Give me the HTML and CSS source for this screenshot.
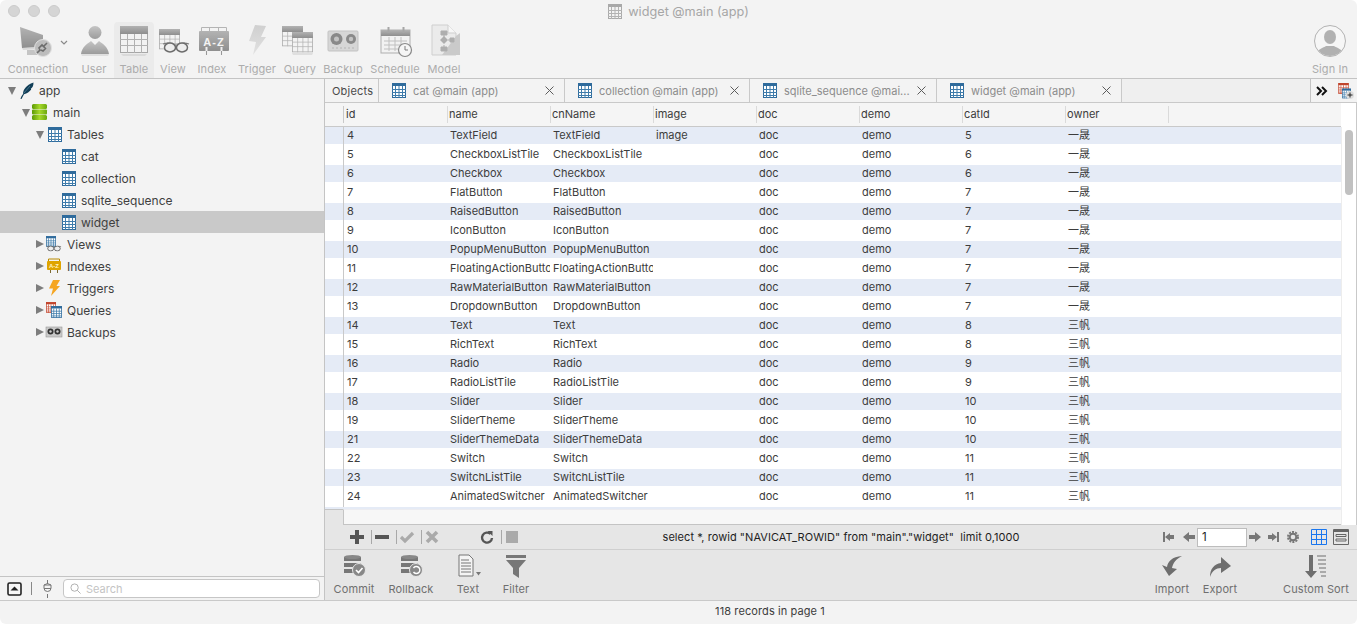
FILE: index.html
```html
<!DOCTYPE html>
<html lang="en">
<head>
<meta charset="utf-8">
<title>widget @main (app)</title>
<link rel="stylesheet" href="styles.css">
</head>
<body>
<svg class="defs" aria-hidden="true">
  <defs>
    <linearGradient id="gDark" x1="0" y1="0" x2="0" y2="1"><stop offset="0" stop-color="#a8a8a8"/><stop offset="1" stop-color="#7e7e7e"/></linearGradient>
    <linearGradient id="gLight" x1="0" y1="0" x2="0" y2="1"><stop offset="0" stop-color="#c9c9c9"/><stop offset="1" stop-color="#dedede"/></linearGradient>
    <linearGradient id="gUser" x1="0" y1="0" x2="0" y2="1"><stop offset="0" stop-color="#bdbdbd"/><stop offset="1" stop-color="#8d8d8d"/></linearGradient>
    <linearGradient id="gGreen" x1="0" y1="0" x2="1" y2="0"><stop offset="0" stop-color="#5d9a05"/><stop offset=".5" stop-color="#a6d92a"/><stop offset="1" stop-color="#6ca80d"/></linearGradient>
    <clipPath id="clipCircle"><circle cx="20" cy="17" r="15"/></clipPath>
  </defs>
  <symbol id="i-tbl" viewBox="0 0 14 15">
    <rect x=".5" y=".5" width="13" height="14" fill="#fff" stroke="#2f6b9c"/>
    <rect x="0" y="0" width="14" height="3" fill="#2f6b9c"/>
    <path d="M0 6.5h14M0 9.500h14M0 12.500h14M3.500 3v12M7 3v12M10.500 3v12" stroke="#3f7cab" fill="none"/>
  </symbol>
  <symbol id="i-tbl-red" viewBox="0 0 14 15">
    <rect x=".5" y=".5" width="13" height="14" fill="#fff" stroke="#c0442c"/>
    <rect x="0" y="0" width="14" height="3" fill="#c0442c"/>
    <path d="M0 6.500h14M0 9.500h14M0 12.500h14M3.500 3v12M7 3v12M10.500 3v12" stroke="#c9553e" fill="none"/>
  </symbol>
  <symbol id="i-tbl-gray" viewBox="0 0 14 15">
    <rect x=".5" y=".5" width="13" height="14" fill="#f3f3f3" stroke="#a9a9a9"/>
    <rect x="0" y="0" width="14" height="3" fill="#a9a9a9"/>
    <path d="M0 6.500h14M0 9.500h14M0 12.500h14M3.500 3v12M7 3v12M10.500 3v12" stroke="#b3b3b3" fill="none"/>
  </symbol>
  <symbol id="t-tbl" viewBox="0 0 28 28">
    <rect x=".5" y=".5" width="27" height="26" fill="#f4f4f4" stroke="#9c9c9c"/>
    <rect x="0" y="0" width="28" height="8" fill="url(#gDark)"/>
    <path d="M0 13.500h28M0 19.500h28M7.500 8v19M14.500 8v19M21.500 8v19" stroke="#a8a8a8" fill="none"/>
  </symbol>
  <symbol id="glasses" viewBox="0 0 28 11">
    <path d="M1 2Q7 0 12 3h4q5-3 11-1" fill="none" stroke="#666" stroke-width="1.200"/>
    <ellipse cx="8" cy="5.500" rx="5.500" ry="4.500" fill="#eee" stroke="#555" stroke-width="1.500"/>
    <ellipse cx="20" cy="5.500" rx="5.500" ry="4.500" fill="#eee" stroke="#555" stroke-width="1.500"/>
  </symbol>
  <symbol id="i-x" viewBox="0 0 9 9"><path d="M.5.500l8 8M8.500.500l-8 8" stroke="#5c5c5c" fill="none"/></symbol>
</svg>

<div class="app">
  <header class="titlebar">
    <div class="lights"><i class="light"></i><i class="light"></i><i class="light"></i></div>
    <div class="title"><svg class="title-icon"><use href="#i-tbl-gray"/></svg><span>widget @main (app)</span></div>
  </header>

  <nav class="toolbar">
    <div class="tool w60 connection">
      <svg class="tool-svg" viewBox="0 0 40 36">
        <path d="M2 3 25 11V23L4 24Z" fill="url(#gDark)"/>
        <path d="M4 24 25 23V25L5 26Z" fill="#d4d4d4"/>
        <path d="M9 26h9l2 5H9Z" fill="#bcbcbc"/>
        <circle cx="25" cy="24" r="8.500" fill="#b4b4b4" stroke="#ddd"/>
        <path d="M29 19l-4 4m3 2-4-4-3 3 1 2-3 3m4-3 2 1 3-3" stroke="#555" stroke-width="1.600" fill="none"/>
      </svg>
      <span>Connection</span>
      <svg class="chevron" viewBox="0 0 8 5"><path d="M1 1l3 3 3-3" fill="none" stroke="#8a8a8a" stroke-width="1.200"/></svg>
    </div>
    <div class="tool w40">
      <svg class="tool-svg" viewBox="0 0 40 36">
        <circle cx="21" cy="8.500" r="6.500" fill="url(#gUser)"/>
        <path d="M7 30C8 23 13 20 17 17l4 4 4-4c4 3 9 6 10 13Z" fill="url(#gUser)"/>
        <path d="M7 30h28l-1 2H8Z" fill="#dcdcdc"/>
      </svg>
      <span>User</span>
    </div>
    <div class="tool w40 active">
      <svg class="tool-svg" viewBox="0 0 40 36"><use href="#t-tbl" x="6" y="2" width="28" height="28"/><path d="M7 30h26l-2 2H9Z" fill="#d8d8d8"/></svg>
      <span>Table</span>
    </div>
    <div class="tool w38">
      <svg class="tool-svg" viewBox="0 0 40 36">
        <use href="#t-tbl" x="6" y="5" width="21" height="21"/>
        <use href="#glasses" x="9" y="18" width="28" height="11"/>
      </svg>
      <span>View</span>
    </div>
    <div class="tool w40">
      <svg class="tool-svg" viewBox="0 0 40 36">
        <path d="M9.500 7V3.500h25V7M17.500 3.500V7M26.500 3.500V7" fill="none" stroke="#aaa"/>
        <rect x="7" y="7" width="30" height="20" rx="1" fill="url(#gDark)"/>
        <text x="22" y="22" class="az">A-Z</text>
        <path d="M14.500 23v8M29.500 23v8" stroke="#eee" stroke-width="2"/>
        <path d="M14.500 27v4M29.500 27v4" stroke="#888" stroke-width="1"/>
      </svg>
      <span>Index</span>
    </div>
    <div class="tool w50">
      <svg class="tool-svg" viewBox="0 0 40 36">
        <path d="M18 1 29 2 24 13l5 0L16 31l3-13-7-1Z" fill="url(#gLight)"/>
      </svg>
      <span>Trigger</span>
    </div>
    <div class="tool w36">
      <svg class="tool-svg" viewBox="0 0 40 36">
        <use href="#t-tbl" x="2" y="2" width="21" height="21"/>
        <use href="#t-tbl" x="12" y="8" width="21" height="21"/>
        <path d="M12 29h21l-1 2H13Z" fill="#dcdcdc"/>
      </svg>
      <span>Query</span>
    </div>
    <div class="tool w50">
      <svg class="tool-svg" viewBox="0 0 40 36">
        <rect x="5" y="7" width="30" height="20" rx="1" fill="#d2d2d2" stroke="#bbb"/>
        <circle cx="13.500" cy="15" r="6" fill="#777"/><circle cx="13.500" cy="15" r="2.500" fill="#bbb"/>
        <circle cx="28" cy="15" r="5" fill="#777"/><circle cx="28" cy="15" r="2.200" fill="#bbb"/>
        <path d="M9 24h22" stroke="#aaa" stroke-dasharray="2 2"/>
      </svg>
      <span>Backup</span>
    </div>
    <div class="tool w54">
      <svg class="tool-svg" viewBox="0 0 40 36">
        <rect x="6" y="6" width="29" height="23" fill="#f2f2f2" stroke="#a5a5a5"/>
        <rect x="6" y="6" width="29" height="6" fill="url(#gDark)"/>
        <path d="M13.500 3v6M28.500 3v6" stroke="#999" stroke-width="2"/>
        <path d="M9 17h23M9 21h23M9 25h23M14 13v14M20 13v14M26 13v14" stroke="#b8b8b8" fill="none"/>
        <circle cx="30" cy="26" r="6.500" fill="#f6f6f6" stroke="#777" stroke-width="1.200"/>
        <path d="M30 22v4h3" fill="none" stroke="#666"/>
      </svg>
      <span>Schedule</span>
    </div>
    <div class="tool w44">
      <svg class="tool-svg" viewBox="0 0 40 36">
        <path d="M8 1h16l8 8v22H8Z" fill="#eaeaea" stroke="#c9c9c9"/>
        <path d="M24 1v8h8" fill="#f8f8f8" stroke="#c9c9c9"/>
        <path d="M32 12l4-3v22H18Z" fill="#c4c4c4"/>
        <path d="M17 7h6v4h-6ZM17 23h6v4h-6ZM26 14h4v4h-4ZM20 11v2M20 21v2M24 16h2" fill="#a3a3a3" stroke="#a3a3a3"/>
        <path d="M20 12l4 4-4 4-4-4Z" fill="#a3a3a3"/>
      </svg>
      <span>Model</span>
    </div>
    <div class="tool w40 signin">
      <svg class="tool-svg" viewBox="0 0 40 36">
        <circle cx="20" cy="17" r="15.500" fill="#f7f7f7" stroke="#a8a8a8"/>
        <g clip-path="url(#clipCircle)">
          <ellipse cx="20" cy="13" rx="6" ry="7" fill="#a6a6a6"/>
          <path d="M4 34c1-8 9-10 12-12h8c3 2 11 4 12 12Z" fill="#a6a6a6"/>
        </g>
      </svg>
      <span>Sign In</span>
    </div>
  </nav>

  <main class="main">
    <aside class="sidebar">
      <ul class="tree">
        <li class="node d0"><i class="tri open"></i>
          <svg class="node-icon tall" viewBox="0 0 14 17"><path d="M.5 17C1 15 1.800 13.500 3 12 3 8 6 3 13.500.500 13.500 4 12.500 5.500 10.800 6.800L11.200 7.500C9.500 9.800 7 11.500 4 12.200L1.500 17Z" fill="#123f58"/><path d="M3.500 11.500 10 4" stroke="#6c9bb0" stroke-width=".6"/></svg>
          <span>app</span></li>
        <li class="node d1"><i class="tri open"></i>
          <svg class="node-icon wide" viewBox="0 0 15 16">
            <rect x="0" y="0" width="15" height="5" rx="1.500" fill="url(#gGreen)"/>
            <rect x="0" y="5.500" width="15" height="5" rx="1" fill="url(#gGreen)"/>
            <rect x="0" y="11" width="15" height="5" rx="1.500" fill="url(#gGreen)"/>
          </svg>
          <span>main</span></li>
        <li class="node d2"><i class="tri open"></i><svg class="node-icon"><use href="#i-tbl"/></svg><span>Tables</span></li>
        <li class="node leaf"><svg class="node-icon"><use href="#i-tbl"/></svg><span>cat</span></li>
        <li class="node leaf"><svg class="node-icon"><use href="#i-tbl"/></svg><span>collection</span></li>
        <li class="node leaf"><svg class="node-icon"><use href="#i-tbl"/></svg><span>sqlite_sequence</span></li>
        <li class="node leaf selected"><svg class="node-icon"><use href="#i-tbl"/></svg><span>widget</span></li>
        <li class="node d2"><i class="tri"></i>
          <svg class="node-icon big" viewBox="0 0 16 16"><use href="#i-tbl" x="0" y="0" width="10" height="11"/><use href="#glasses" x="0" y="9.500" width="16" height="6"/></svg>
          <span>Views</span></li>
        <li class="node d2"><i class="tri"></i>
          <svg class="node-icon big" viewBox="0 0 16 16">
            <path d="M2.500 3V1h11v2" fill="none" stroke="#b98a00"/>
            <rect x="1" y="3" width="14" height="9" rx="1" fill="#dfa400"/>
            <text x="8" y="10" class="az-small">A-Z</text>
            <path d="M4.500 12v3M11.500 12v3" stroke="#7d6a30"/>
          </svg>
          <span>Indexes</span></li>
        <li class="node d2"><i class="tri"></i>
          <svg class="node-icon big" viewBox="0 0 16 16"><path d="M7 0h7L10.500 6H14L5 16l2-7.500H3Z" fill="#f5a623"/></svg>
          <span>Triggers</span></li>
        <li class="node d2"><i class="tri"></i>
          <svg class="node-icon big" viewBox="0 0 16 16"><use href="#i-tbl-red" x="0" y="0" width="10" height="11"/><use href="#i-tbl" x="5" y="4" width="11" height="12"/></svg>
          <span>Queries</span></li>
        <li class="node d2"><i class="tri"></i>
          <svg class="node-icon big" viewBox="0 0 16 16">
            <rect x="0" y="3" width="16" height="10" fill="#c9c9c9" stroke="#999" stroke-width=".6"/>
            <circle cx="4.500" cy="7.500" r="3" fill="#333"/><circle cx="4.500" cy="7.500" r="1.200" fill="#ccc"/>
            <circle cx="11.500" cy="7.500" r="3" fill="#333"/><circle cx="11.500" cy="7.500" r="1.200" fill="#ccc"/>
          </svg>
          <span>Backups</span></li>
      </ul>
      <div class="sidebar-foot">
        <svg class="foot-toggle" viewBox="0 0 15 14"><rect x="1" y="1" width="13" height="12" rx="1.500" fill="#f7f7f7" stroke="#222" stroke-width="1.600"/><path d="M7.500 4.500l4 4h-8Z" fill="#222"/></svg>
        <i class="foot-sep"></i>
        <svg class="foot-plug" viewBox="0 0 9 18"><path d="M4.500 0v4M4.500 14v4" stroke="#777"/><path d="M1 5h7v3a3.500 3.500 0 0 1-7 0ZM1 8.500h7M1 5q3.500-3 7 0" fill="none" stroke="#777"/></svg>
        <label class="search">
          <svg class="search-icon" viewBox="0 0 12 12"><circle cx="5" cy="5" r="4" fill="none" stroke="#aaa"/><path d="M8 8l3.500 3.500" stroke="#aaa"/></svg>
          <span>Search</span>
        </label>
      </div>
    </aside>

    <section class="content">
      <div class="tabs">
        <div class="tab-objects">Objects</div>
        <div class="tab t186"><svg class="tab-icon"><use href="#i-tbl"/></svg><span class="tab-label">cat @main (app)</span><span class="tab-x"><svg class="x-icon"><use href="#i-x"/></svg></span></div>
        <div class="tab t185"><svg class="tab-icon"><use href="#i-tbl"/></svg><span class="tab-label">collection @main (app)</span><span class="tab-x"><svg class="x-icon"><use href="#i-x"/></svg></span></div>
        <div class="tab t187"><svg class="tab-icon"><use href="#i-tbl"/></svg><span class="tab-label">sqlite_sequence @mai...</span><span class="tab-x"><svg class="x-icon"><use href="#i-x"/></svg></span></div>
        <div class="tab t185"><svg class="tab-icon"><use href="#i-tbl"/></svg><span class="tab-label">widget @main (app)</span><span class="tab-x"><svg class="x-icon"><use href="#i-x"/></svg></span></div>
        <div class="tab-fill"></div>
        <div class="tab-tools">
          <svg class="more" viewBox="0 0 12 10"><path d="M1 1l4 4-4 4M6 1l4 4-4 4" fill="none" stroke="#111" stroke-width="2"/></svg>
          <svg class="newtab" viewBox="0 0 16 16"><use href="#i-tbl-red" x="0" y="0" width="11" height="11"/><use href="#i-tbl" x="4" y="5" width="9" height="11"/><circle cx="12" cy="12" r="4" fill="#ddd"/><path d="M12 9.500v5M9.500 12h5" stroke="#222"/></svg>
        </div>
      </div>

      <div class="grid">
        <div class="pane">
          <table class="data">
            <colgroup><col class="c-gutter"><col class="c"><col class="c"><col class="c"><col class="c"><col class="c"><col class="c"><col class="c"><col class="c"><col></colgroup>
            <thead>
              <tr><th class="gutter"><span></span></th><th class="first"><span>id</span></th><th><span>name</span></th><th><span>cnName</span></th><th><span>image</span></th><th><span>doc</span></th><th><span>demo</span></th><th><span>catId</span></th><th><span>owner</span></th><th><span></span></th></tr>
            </thead>
            <tbody>
              <tr><td class="gutter"></td><td>4</td><td>TextField</td><td>TextField</td><td>image</td><td>doc</td><td>demo</td><td>5</td><td>一晟</td><td></td></tr>
              <tr><td class="gutter"></td><td>5</td><td>CheckboxListTile</td><td>CheckboxListTile</td><td></td><td>doc</td><td>demo</td><td>6</td><td>一晟</td><td></td></tr>
              <tr><td class="gutter"></td><td>6</td><td>Checkbox</td><td>Checkbox</td><td></td><td>doc</td><td>demo</td><td>6</td><td>一晟</td><td></td></tr>
              <tr><td class="gutter"></td><td>7</td><td>FlatButton</td><td>FlatButton</td><td></td><td>doc</td><td>demo</td><td>7</td><td>一晟</td><td></td></tr>
              <tr><td class="gutter"></td><td>8</td><td>RaisedButton</td><td>RaisedButton</td><td></td><td>doc</td><td>demo</td><td>7</td><td>一晟</td><td></td></tr>
              <tr><td class="gutter"></td><td>9</td><td>IconButton</td><td>IconButton</td><td></td><td>doc</td><td>demo</td><td>7</td><td>一晟</td><td></td></tr>
              <tr><td class="gutter"></td><td>10</td><td>PopupMenuButton</td><td>PopupMenuButton</td><td></td><td>doc</td><td>demo</td><td>7</td><td>一晟</td><td></td></tr>
              <tr><td class="gutter"></td><td>11</td><td>FloatingActionButton</td><td>FloatingActionButton</td><td></td><td>doc</td><td>demo</td><td>7</td><td>一晟</td><td></td></tr>
              <tr><td class="gutter"></td><td>12</td><td>RawMaterialButton</td><td>RawMaterialButton</td><td></td><td>doc</td><td>demo</td><td>7</td><td>一晟</td><td></td></tr>
              <tr><td class="gutter"></td><td>13</td><td>DropdownButton</td><td>DropdownButton</td><td></td><td>doc</td><td>demo</td><td>7</td><td>一晟</td><td></td></tr>
              <tr><td class="gutter"></td><td>14</td><td>Text</td><td>Text</td><td></td><td>doc</td><td>demo</td><td>8</td><td>三帆</td><td></td></tr>
              <tr><td class="gutter"></td><td>15</td><td>RichText</td><td>RichText</td><td></td><td>doc</td><td>demo</td><td>8</td><td>三帆</td><td></td></tr>
              <tr><td class="gutter"></td><td>16</td><td>Radio</td><td>Radio</td><td></td><td>doc</td><td>demo</td><td>9</td><td>三帆</td><td></td></tr>
              <tr><td class="gutter"></td><td>17</td><td>RadioListTile</td><td>RadioListTile</td><td></td><td>doc</td><td>demo</td><td>9</td><td>三帆</td><td></td></tr>
              <tr><td class="gutter"></td><td>18</td><td>Slider</td><td>Slider</td><td></td><td>doc</td><td>demo</td><td>10</td><td>三帆</td><td></td></tr>
              <tr><td class="gutter"></td><td>19</td><td>SliderTheme</td><td>SliderTheme</td><td></td><td>doc</td><td>demo</td><td>10</td><td>三帆</td><td></td></tr>
              <tr><td class="gutter"></td><td>21</td><td>SliderThemeData</td><td>SliderThemeData</td><td></td><td>doc</td><td>demo</td><td>10</td><td>三帆</td><td></td></tr>
              <tr><td class="gutter"></td><td>22</td><td>Switch</td><td>Switch</td><td></td><td>doc</td><td>demo</td><td>11</td><td>三帆</td><td></td></tr>
              <tr><td class="gutter"></td><td>23</td><td>SwitchListTile</td><td>SwitchListTile</td><td></td><td>doc</td><td>demo</td><td>11</td><td>三帆</td><td></td></tr>
              <tr><td class="gutter"></td><td>24</td><td>AnimatedSwitcher</td><td>AnimatedSwitcher</td><td></td><td>doc</td><td>demo</td><td>11</td><td>三帆</td><td></td></tr>
            </tbody>
          </table>
          <div class="sliver"></div>
          <div class="pane-foot"><i class="foot-gutter"></i><i class="foot-rest"></i></div>
        </div>
        <div class="vscroll"><div class="vscroll-head"></div><div class="vscroll-track"><i class="thumb"></i></div></div>
      </div>

      <div class="querybar">
        <div class="edit-tools">
          <svg class="ico plus" viewBox="0 0 14 14"><path d="M7 0v14M0 7h14" stroke="#555" stroke-width="4"/></svg>
          <i class="sep"></i>
          <svg class="ico" viewBox="0 0 14 14"><path d="M0 7h14" stroke="#555" stroke-width="4"/></svg>
          <i class="sep"></i>
          <svg class="ico" viewBox="0 0 14 14"><path d="M1 7l4 4 8-8" fill="none" stroke="#aaa" stroke-width="3.200"/></svg>
          <i class="sep"></i>
          <svg class="ico" viewBox="0 0 14 14"><path d="M2 2l10 10M12 2 2 12" stroke="#aaa" stroke-width="3.600"/></svg>
          <svg class="ico refresh" viewBox="0 0 14 14"><path d="M10.500 4A5 5 0 1 0 12 8" fill="none" stroke="#555" stroke-width="2.400"/><path d="M7.500 1l5 0 0 5Z" fill="#555"/></svg>
          <i class="sep"></i>
          <svg class="ico" viewBox="0 0 14 14"><rect x="1" y="1" width="12" height="12" fill="#aaa"/></svg>
        </div>
        <div class="sql">select *, rowid "NAVICAT_ROWID" from "main"."widget"&nbsp; limit 0,1000</div>
        <div class="pager">
          <svg class="nav" viewBox="0 0 12 12"><path d="M1 1h2v10H1ZM3 6l5-4v2h4v4H8v2Z" fill="#777"/></svg>
          <svg class="nav g8" viewBox="0 0 12 12"><path d="M0 6l6-5v3h6v4H6v3Z" fill="#777"/></svg>
          <div class="page-input">1</div>
          <svg class="nav" viewBox="0 0 12 12"><path d="M12 6 6 1v3H0v4h6v3Z" fill="#777"/></svg>
          <svg class="nav g7" viewBox="0 0 12 12"><path d="M11 1H9v10h2ZM9 6 4 2v2H0v4h4v2Z" fill="#777"/></svg>
          <svg class="nav g7" viewBox="0 0 12 12"><circle cx="6" cy="6" r="5" fill="none" stroke="#777" stroke-width="2" stroke-dasharray="2 1.140"/><circle cx="6" cy="6" r="3.300" fill="none" stroke="#777" stroke-width="2"/></svg>
          <svg class="view g12" viewBox="0 0 16 16"><path d="M.5.500h15v15H.5ZM.5 5.500h15M.5 10.500h15M5.500.500v15M10.500.500v15" fill="none" stroke="#1a76ee"/></svg>
          <svg class="view g6" viewBox="0 0 16 16"><path d="M.5.500h15v15H.5Z" fill="none" stroke="#666"/><path d="M0 2h16" stroke="#666" stroke-width="2"/><path d="M3 5.500h10v2H3ZM3 10h10v2H3Z" fill="none" stroke="#666"/></svg>
        </div>
      </div>

      <div class="actions">
        <div class="action a58">
          <svg class="act-svg" viewBox="0 0 26 26"><path d="M3 3h17v4H3ZM3 9h17v4H3ZM3 15h17v4H3Z" fill="#777"/><ellipse cx="11.500" cy="3" rx="8.500" ry="2" fill="#888"/><circle cx="18" cy="16" r="6.500" fill="#888" stroke="#e6e6e6"/><path d="M15 16l2.500 2.500 4-4.500" fill="none" stroke="#fff" stroke-width="1.600"/></svg>
          <span>Commit</span>
        </div>
        <div class="action a56">
          <svg class="act-svg" viewBox="0 0 26 26"><path d="M3 3h17v4H3ZM3 9h17v4H3ZM3 15h17v4H3Z" fill="#777"/><ellipse cx="11.500" cy="3" rx="8.500" ry="2" fill="#888"/><circle cx="18" cy="16" r="6.500" fill="#888" stroke="#e6e6e6"/><path d="M15.500 14a3.500 3.500 0 1 1 0 4" fill="none" stroke="#fff" stroke-width="1.400"/></svg>
          <span>Rollback</span>
        </div>
        <div class="action a58">
          <svg class="act-svg" viewBox="0 0 26 26"><path d="M4 1h10l4 4v17H4Z" fill="#f4f4f4" stroke="#777"/><path d="M6 6h8M6 9h10M6 12h10M6 15h10M6 18h10" stroke="#777"/><path d="M21 18h5l-2.500 3.500Z" fill="#777"/></svg>
          <span>Text</span>
        </div>
        <div class="action a38">
          <svg class="act-svg" viewBox="0 0 26 26"><path d="M3 1h20v3H3ZM3 6h20l-7 8v10l-6-4v-6Z" fill="#777"/></svg>
          <span>Filter</span>
        </div>
        <div class="action a48 push">
          <svg class="act-svg" viewBox="0 0 26 26"><path d="M23 2C13 3 9 7 8 13L3 11l7 11 8-7-5-1C14 9 17 5 23 2Z" fill="#6e6e6e"/></svg>
          <span>Import</span>
        </div>
        <div class="action a48">
          <svg class="act-svg" viewBox="0 0 26 26"><path d="M3 23C3 15 7 10 14 9V3l10 9-10 7v-5C9 14 5 17 3 23Z" fill="#6e6e6e"/></svg>
          <span>Export</span>
        </div>
        <div class="action a78 sort">
          <svg class="act-svg" viewBox="0 0 26 26"><path d="M6 1h4v16h4l-6 7-6-7h4Z" fill="#6e6e6e"/><path d="M14 2h9M15 6h8M15 10h8M16 14h7M17 18h6M18 22h5" stroke="#6e6e6e"/></svg>
          <span>Custom Sort</span>
        </div>
      </div>
    </section>
  </main>

  <footer class="status">118 records in page 1</footer>
</div>
</body>
</html>
```
FILE: styles.css
```css
* { box-sizing: border-box; }
html, body { margin: 0; height: 100%; background: #fff; overflow: hidden; }
body { font-family: Inter, "Noto Sans CJK SC", sans-serif; font-size: 11px; color: #3c3c3c; }
ul { margin: 0; padding: 0; list-style: none; }
i { display: block; font-style: normal; }
svg { display: block; flex: none; overflow: visible; }
.defs { position: absolute; width: 0; height: 0; overflow: hidden; }

.app { height: 624px; display: flex; flex-direction: column; background: #f3f3f3; border-radius: 6px; overflow: hidden; }

/* title bar */
.titlebar { height: 22px; flex: none; position: relative; display: flex; align-items: center; justify-content: center; }
.lights { position: absolute; left: 8px; top: 5px; display: flex; gap: 8px; }
.light { width: 12px; height: 12px; border-radius: 50%; background: #d5d5d5; border: 1px solid #cbcbcb; }
.title { display: flex; align-items: center; gap: 6px; font-size: 12.700px; color: #a6a6a6; }
.title-icon { width: 14px; height: 15px; }

/* main toolbar */
.toolbar { height: 57px; flex: none; display: flex; padding-left: 8px; border-bottom: 1px solid #c4c4c4; }
.tool { display: flex; flex-direction: column; align-items: center; height: 56px; padding-top: 2px; position: relative; color: #acacac; font-size: 11px; letter-spacing: .1px; white-space: nowrap; }
.tool-svg { width: 40px; height: 36px; opacity: .85; }
.tool span { line-height: 14px; margin-top: 2px; }
.w36 { width: 36px; } .w38 { width: 38px; } .w40 { width: 40px; } .w44 { width: 44px; }
.w50 { width: 50px; } .w54 { width: 54px; } .w60 { width: 60px; }
.connection { margin-right: 6px; }
.active { background: #ebebeb; border-radius: 4px 4px 0 0; }
.chevron { position: absolute; left: 52px; top: 18px; width: 8px; height: 5px; }
.signin { margin-left: auto; margin-right: 7px; }
.az { font: bold 11px "Liberation Sans", sans-serif; fill: #f4f4f4; text-anchor: middle; letter-spacing: 1px; }
.az-small { font: bold 6px "Liberation Sans", sans-serif; fill: #fff3c4; text-anchor: middle; }

/* body */
.main { flex: 1; min-height: 0; display: flex; }

/* sidebar */
.sidebar { width: 325px; flex: none; display: flex; flex-direction: column; border-right: 1px solid #c4c4c4; }
.tree { flex: 1; }
.node { height: 22px; display: flex; align-items: center; font-size: 12px; color: #3f3f3f; }
.d0 { padding-left: 8px; } .d1 { padding-left: 22px; } .d2 { padding-left: 36px; } .leaf { padding-left: 62px; }
.selected { background: #c9c9c9; }
.tri { width: 12px; flex: none; height: 9px; position: relative; }
.tri::before { content: ""; position: absolute; left: 0; top: 0; border-style: solid; border-color: transparent; border-width: 4.500px 0 4.500px 8px; border-left-color: #7d7d7d; }
.tri.open::before { top: 1px; border-width: 8px 4.500px 0 4.500px; border-color: #7d7d7d transparent transparent transparent; }
.node-icon { width: 14px; height: 15px; margin-right: 5px; }
.node-icon.tall { height: 17px; }
.node-icon.wide { width: 15px; height: 16px; margin-left: -2px; margin-right: 6px; }
.node-icon.big { width: 16px; height: 16px; margin-left: -2px; margin-right: 5px; }
.sidebar-foot { height: 24px; flex: none; border-top: 1px solid #c4c4c4; display: flex; align-items: center; padding-left: 7px; }
.foot-toggle { width: 15px; height: 14px; }
.foot-sep { width: 1px; height: 13px; background: #888; margin-left: 9px; }
.foot-plug { width: 9px; height: 18px; margin-left: 11px; }
.search { margin-left: 11px; width: 257px; height: 19px; background: #fff; border: 1px solid #c6c6c6; border-radius: 4px; display: flex; align-items: center; padding-left: 6px; gap: 5px; color: #c4c4c4; }
.search-icon { width: 11px; height: 11px; }

/* content */
.content { flex: 1; min-width: 0; display: flex; flex-direction: column; }
.tabs { height: 24px; flex: none; display: flex; border-bottom: 1px solid #c9c9c9; }
.tab-objects { width: 54px; flex: none; padding-left: 7px; line-height: 24px; border-right: 1px solid #c9c9c9; color: #4a4a4a; letter-spacing: .2px; }
.tab { flex: none; display: flex; align-items: center; padding-left: 13px; border-right: 1px solid #c9c9c9; }
.t185 { width: 185px; } .t186 { width: 186px; } .t187 { width: 187px; }
.tab-icon { width: 14px; height: 15px; margin-right: 7px; }
.tab-label { flex: 1; min-width: 0; white-space: nowrap; color: #8c8c8c; }
.tab-x { width: 30px; flex: none; display: flex; justify-content: center; }
.x-icon { width: 9px; height: 9px; }
.tab-fill { width: 189px; flex: none; background: #efefef; border-right: 1px solid #c4c4c4; }
.tab-tools { flex: 1; display: flex; align-items: center; padding-left: 4px; gap: 10px; }
.more { width: 12px; height: 10px; margin-left: 1px; }
.newtab { width: 16px; height: 16px; }

.grid { flex: 1; min-height: 0; display: flex; }
.pane { flex: 1; min-width: 0; display: flex; flex-direction: column; }
.data { width: 100%; table-layout: fixed; border-collapse: separate; border-spacing: 0; flex: none; }
.c-gutter { width: 19px; } .c { width: 103px; }
.data th { height: 24px; padding: 0; background: #f5f5f5; border-bottom: 1px solid #c9c9c9; font-weight: 400; text-align: left; color: #3c3c3c; }
.data th span { display: block; height: 17px; line-height: 16px; border-left: 1px solid #dadada; padding-left: 1px; overflow: hidden; white-space: nowrap; }
.data th.first span { border-left: 0; padding-left: 2px; }
.data th.gutter span { border-left: 0; border-right: 1px solid #c9c9c9; }
.data td { padding: 0 3px; overflow: hidden; white-space: nowrap; line-height: 15px; }
.data tbody tr:nth-child(odd) td { height: 17px; background: #e5ebf6; }
.data tbody tr:nth-child(even) td { height: 21px; background: #fff; }
.data td.gutter { padding: 0; border-right: 1px solid #c9c9c9; }
.sliver { height: 2px; flex: none; background: #e5ebf6; }
.pane-foot { flex: 1; display: flex; }
.foot-gutter { width: 18px; flex: none; background: #e6e6e6; border-top: 1px solid #c4c4c4; }
.foot-rest { flex: 1; background: #f7f7f7; border-left: 1px solid #c4c4c4; border-bottom: 1px solid #c4c4c4; border-top: 1px solid #ececf0; }
.vscroll { width: 16px; flex: none; display: flex; flex-direction: column; background: #fff; border-right: 1px solid #c9c9c9; }
.vscroll-head { height: 24px; flex: none; }
.vscroll-track { flex: 1; padding: 3px 3px 0 3px; border-left: 1px solid #ededed; }
.thumb { width: 8px; height: 65px; background: #c1c1c1; border-radius: 4px; }

/* query bar */
.querybar { height: 25px; flex: none; display: grid; grid-template-columns: 1fr auto 1fr; align-items: center; background: #e6e6e6; border-bottom: 1px solid #cfcfcf; }
.edit-tools { display: flex; align-items: center; padding-left: 25px; }
.ico { width: 14px; height: 14px; }
.sep { width: 1px; height: 14px; background: #a8a8a8; margin: 0 3px 0 7px; }
.refresh { margin-left: 41px; }
.sql { color: #1e1e1e; white-space: nowrap; letter-spacing: .06px; }
.pager { display: flex; align-items: center; justify-content: flex-end; padding-right: 8px; gap: 2px; }
.nav { width: 12px; height: 12px; }
.view { width: 16px; height: 16px; }
.g8 { margin-left: 7px; } .g7 { margin-left: 5px; } .g12 { margin-left: 10px; } .g6 { margin-left: 4px; }
.page-input { width: 50px; height: 19px; background: #fff; border: 1px solid #bdbdbd; padding-left: 4px; line-height: 17px; color: #222; font-size: 11.500px; }

/* actions */
.actions { height: 50px; flex: none; display: flex; background: #e6e6e6; }
.action { display: flex; flex-direction: column; align-items: center; padding-top: 4px; color: #6f6f6f; white-space: nowrap; letter-spacing: .1px; }
.act-svg { width: 26px; height: 26px; }
.action span { margin-top: 2px; line-height: 14px; }
.a38 { width: 38px; } .a48 { width: 48px; } .a56 { width: 56px; } .a58 { width: 58px; } .a78 { width: 78px; }
.push { margin-left: auto; }
.sort { margin-left: 33px; margin-right: 2px; }

/* status */
.status { height: 24px; flex: none; border-top: 1px solid #c9c9c9; text-align: center; padding-left: 183px; line-height: 21px; color: #3c3c3c; letter-spacing: .1px; }
```
